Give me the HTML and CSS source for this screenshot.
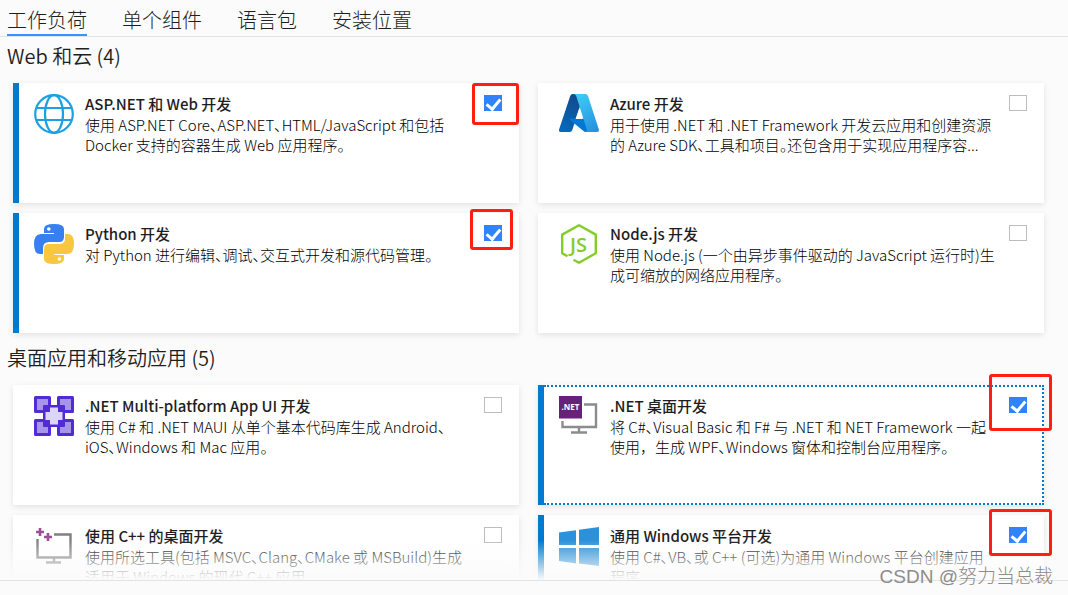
FILE: index.html
```html
<!DOCTYPE html>
<html lang="zh-CN">
  <head>
    <meta charset="UTF-8" />
    <meta name="viewport" content="width=device-width, initial-scale=1.0" />
    <title>工作负荷</title>
    <link rel="stylesheet" href="styles.css">
  </head>
  <body>
    <!-- 顶部选项卡 -->
    <nav class="tabs">
      <a class="tab active" href="#">工作负荷</a>
      <a class="tab" href="#">单个组件</a>
      <a class="tab" href="#">语言包</a>
      <a class="tab" href="#">安装位置</a>
    </nav>

    <!-- 工作负荷列表 -->
    <main class="list">
      <section class="group">
        <h2>Web 和云 (4)</h2>
        <div class="cards">
          <div class="card selected">
            <svg class="icon" viewBox="0 0 40 40" fill="none" stroke="#1ba1e2" stroke-width="2.2">
              <circle cx="20" cy="20" r="18.8" />
              <ellipse cx="20" cy="20" rx="9" ry="18.8" />
              <path d="M3 14H37M3 26H37" />
            </svg>
            <div class="info">
              <label for="w-web">ASP.NET 和 Web 开发</label>
              <p>使用 ASP.NET Core、ASP.NET、HTML/JavaScript 和包括<br>Docker 支持的容器生成 Web 应用程序。</p>
            </div>
            <input type="checkbox" id="w-web" checked>
            <span class="mark mark-web"></span>
          </div>

          <div class="card">
            <svg class="icon" viewBox="0 0 40 40">
              <defs>
                <linearGradient id="az1" x1="0.6" y1="0" x2="0.2" y2="1">
                  <stop offset="0" stop-color="#114a8b" />
                  <stop offset="1" stop-color="#0669bc" />
                </linearGradient>
                <linearGradient id="az2" x1="0.3" y1="0" x2="0.7" y2="1">
                  <stop offset="0" stop-color="#3ccbf4" />
                  <stop offset="1" stop-color="#2892df" />
                </linearGradient>
              </defs>
              <path d="M13.5 0H25L13.2 36.2Q12.6 38 10.6 38H2Q-.8 38 .2 35L11.2 2Q12 0 13.5 0Z" fill="url(#az1)" />
              <path d="M11 24.5H28.5L31 38H27Q25.4 38 24.2 36.8L10.6 25.8Z" fill="#0078d4" />
              <path d="M14 0H26.3Q28.3 0 29 2L39.8 35.3Q40.6 38 38 38H26.3Q28.5 37.4 27.6 34.8L17.2 2Q16.6 0 14 0Z" fill="url(#az2)" />
              <path d="M20.2 14.5L23.7 25H16.6Z" fill="#fff" />
            </svg>
            <div class="info">
              <label for="w-azure">Azure 开发</label>
              <p>用于使用 .NET 和 .NET Framework 开发云应用和创建资源<br>的 Azure SDK、工具和项目。还包含用于实现应用程序容...</p>
            </div>
            <input type="checkbox" id="w-azure">
          </div>

          <div class="card selected">
            <svg class="icon" viewBox="0 0 40 40">
              <path d="M10 9V5Q10 0 20 0T30 5V13Q30 18 25 18H15Q9 18 9 24V30H6Q0 30 0 20T7 10H20V9Z" fill="#3880f0" />
              <path d="M30 31V35Q30 40 20 40T10 35V25Q10 20 15 20H25Q31 20 31 15V10H34Q40 10 40 20T33 30H20V31Z" fill="#f8c640" />
              <circle cx="14.8" cy="5" r="1.8" fill="#fff" />
              <circle cx="25.4" cy="35" r="1.8" fill="#fff" />
            </svg>
            <div class="info">
              <label for="w-python">Python 开发</label>
              <p>对 Python 进行编辑、调试、交互式开发和源代码管理。</p>
            </div>
            <input type="checkbox" id="w-python" checked>
            <span class="mark mark-python"></span>
          </div>

          <div class="card">
            <svg class="icon" viewBox="0 0 40 40">
              <path d="M8.5 32.2L3.2 29.2V10.6L20 1.2L36.8 10.6V29.2L20 38.8L14.6 35.8" fill="none" stroke="#83cd29" stroke-width="2.4" stroke-linejoin="round" />
              <text x="11" y="28" class="js">JS</text>
            </svg>
            <div class="info">
              <label for="w-node">Node.js 开发</label>
              <p>使用 Node.js (一个由异步事件驱动的 JavaScript 运行时)生<br>成可缩放的网络应用程序。</p>
            </div>
            <input type="checkbox" id="w-node">
          </div>
        </div>
      </section>

      <section class="group">
        <h2>桌面应用和移动应用 (5)</h2>
        <div class="cards">
          <div class="card">
            <svg class="icon" viewBox="0 0 40 40">
              <g fill="#a795e8" stroke="#512bd4" stroke-width="3" stroke-linejoin="round">
                <rect x="1.5" y="1.5" width="14" height="14" />
                <rect x="24.5" y="1.5" width="14" height="14" />
                <rect x="1.5" y="24.5" width="14" height="14" />
                <rect x="24.5" y="24.5" width="14" height="14" />
              </g>
              <rect x="9" y="9" width="22" height="22" rx="1" fill="#512bd4" />
              <path d="M16 11.5H24V16H28.5V24H24V28.5H16V24H11.5V16H16Z" fill="#dcd5f6" />
            </svg>
            <div class="info">
              <label for="w-maui">.NET Multi-platform App UI 开发</label>
              <p>使用 C# 和 .NET MAUI 从单个基本代码库生成 Android、<br>iOS、Windows 和 Mac 应用。</p>
            </div>
            <input type="checkbox" id="w-maui">
          </div>

          <div class="card selected focused">
            <svg class="icon" viewBox="0 0 40 40">
              <path d="M25 8.5H37V31H3.5V25M20 31V36M12 36.5H28" fill="none" stroke="#8c8c8c" stroke-width="2.4" />
              <rect width="23" height="22.5" fill="#68217a" />
              <text x="11.5" y="14" class="net">.NET</text>
            </svg>
            <div class="info">
              <label for="w-desktop">.NET 桌面开发</label>
              <p>将 C#、Visual Basic 和 F# 与 .NET 和 NET Framework 一起<br>使用<span class="full">，</span>生成 WPF、Windows 窗体和控制台应用程序。</p>
            </div>
            <input type="checkbox" id="w-desktop" checked>
            <span class="mark mark-desktop"></span>
          </div>

          <div class="card">
            <svg class="icon" viewBox="0 0 40 40">
              <path d="M20 8.5H36.5V31.5H3.5V13M20 31.5V36M12 36.5H27" fill="none" stroke="#808080" stroke-width="2.4" />
              <path d="M6 2V10M2 6H10M14 7V15M10 11H18" stroke="#9b4f96" stroke-width="2.6" />
            </svg>
            <div class="info">
              <label for="w-cpp">使用 C++ 的桌面开发</label>
              <p>使用所选工具(包括 MSVC、Clang、CMake 或 MSBuild)生成<br>适用于 Windows 的现代 C++ 应用。</p>
            </div>
            <input type="checkbox" id="w-cpp">
          </div>

          <div class="card selected">
            <svg class="icon" viewBox="0 0 40 40" fill="#2b91da">
              <path d="M0 6.5L17 4.2V19H0ZM20 3.8L40 1V19H20ZM0 22H17V37.5L0 35ZM20 22H40V40L20 37.5Z" />
            </svg>
            <div class="info">
              <label for="w-uwp">通用 Windows 平台开发</label>
              <p>使用 C#、VB、或 C++ (可选)为通用 Windows 平台创建应用<br>程序。</p>
            </div>
            <input type="checkbox" id="w-uwp" checked>
            <span class="mark mark-uwp"></span>
          </div>
        </div>
      </section>
    </main>

    <footer class="bottom">
      <span class="watermark">CSDN @努力当总裁</span>
    </footer>
  </body>
</html>
```
FILE: styles.css
```css
:root {
  --page: #fbfbfb;
  --ink: #1e1e1e;
  --blue: #007acc; /* 选中卡片的左边条 */
  --check: #3183fd;
  --line: #e3e3e3;
  --red: #ff1e10; /* 标注框 */
}

* {
  box-sizing: border-box;
}

body {
  margin: 0;
  height: 100vh;
  display: flex;
  flex-direction: column;
  background: var(--page);
  color: var(--ink);
  font-family: "Noto Sans CJK SC", sans-serif;
  font-weight: 300;
}

/* --- 选项卡 --- */
.tabs {
  display: flex;
  gap: 35px;
  padding: 0 7px;
  height: 37px;
  border-bottom: 1px solid var(--line);
}

.tab {
  height: 36px;
  padding-top: 5px;
  border-bottom: 2px solid transparent;
  color: inherit;
  font-size: 20px;
  line-height: 29px;
  text-decoration: none;
}

.tab.active {
  border-color: #3794ff;
}

/* --- 列表 --- */
.list {
  flex: 1;
  min-height: 0;
  overflow: hidden;
  position: relative;
  padding-top: 4px;
}

/* 底部渐隐 */
.list::after {
  content: '';
  position: absolute;
  left: 0;
  right: 0;
  bottom: 0;
  height: 40px;
  background: linear-gradient(rgba(251, 251, 251, 0), var(--page));
}

.group {
  margin-bottom: 10px;
}

h2 {
  margin: 0 7px 12px;
  font-size: 20px;
  font-weight: 350;
  line-height: 30px;
}

.cards {
  display: grid;
  grid-template-columns: 1fr 1fr;
  gap: 10px 19px;
  padding: 0 24px 0 13px;
}

.card {
  position: relative;
  display: flex;
  height: 120px;
  padding: 11px 17px 0 15px;
  background: #fff;
  border-left: 6px solid #fff;
  box-shadow: 0 2px 6px rgba(0, 0, 0, 0.1);
}

.card.selected {
  border-left-color: var(--blue);
}

.card.focused::before {
  content: '';
  position: absolute;
  inset: 0;
  border: 2px dotted var(--blue);
  border-left: 0;
}

.icon {
  flex: none;
  width: 40px;
  height: 40px;
  margin-right: 11px;
  overflow: visible;
}

.js {
  font: 600 20px "Open Sans", sans-serif;
  fill: #83cd29;
}

.net {
  font: 700 8px "Open Sans", sans-serif;
  fill: #fff;
  text-anchor: middle;
}

.info {
  flex: 1;
  min-width: 0;
  font-size: 15px;
  line-height: 20px;
  white-space: nowrap;
}

.info label {
  display: block;
  height: 21px;
  font-weight: 500;
}

.info p {
  margin: 0;
  color: #000;
  font-feature-settings: "palt";
}

.info .full {
  font-feature-settings: normal;
}

input[type="checkbox"] {
  appearance: none;
  flex: none;
  width: 18px;
  height: 16px;
  margin: 1px 0 0;
  background: #fff;
  border: 1px solid #bdbdbd;
}

input[type="checkbox"]:checked {
  background: var(--check);
  border-color: var(--check);
}

input[type="checkbox"]:checked::before {
  content: '';
  display: block;
  width: 6px;
  height: 11px;
  margin: 0 0 0 4px;
  border: solid #fff;
  border-width: 0 3px 3px 0;
  transform: rotate(40deg);
}

/* --- 红色标注框 --- */
.mark {
  position: absolute;
  z-index: 1;
  border: 3px solid var(--red);
  border-radius: 3px;
  pointer-events: none;
}

.mark-web {
  top: 0;
  right: 0;
  width: 47px;
  height: 42px;
}

.mark-python {
  top: -4px;
  right: 6px;
  width: 43px;
  height: 41px;
}

.mark-desktop {
  top: -11px;
  right: -8px;
  width: 63px;
  height: 57px;
}

.mark-uwp {
  top: -6px;
  right: -8px;
  width: 63px;
  height: 47px;
}

/* --- 底部 --- */
.bottom {
  position: relative;
  height: 15px;
  border-top: 1px solid var(--line);
}

.watermark {
  position: absolute;
  right: 15px;
  bottom: 4px;
  color: #8c8c8c;
  font: 300 19px/28px "Liberation Sans", "Noto Sans CJK SC", sans-serif;
  white-space: nowrap;
}
```
